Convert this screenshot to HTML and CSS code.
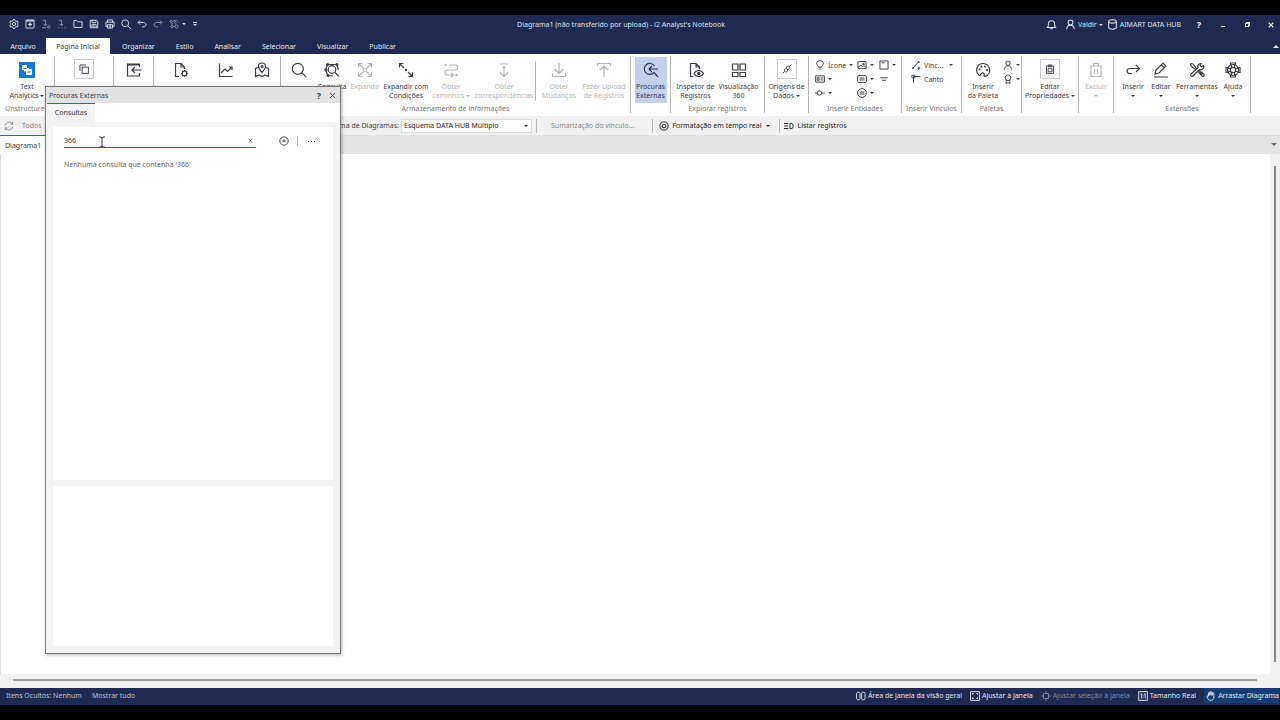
FILE: index.html
```html
<!DOCTYPE html>
<html lang="pt-BR">
<head>
    <meta charset="UTF-8">
    <meta name="viewport" content="width=device-width, initial-scale=1.0">
    <title>Diagrama1 - i2 Analyst's Notebook</title>
    <link rel="stylesheet" href="styles.css">
</head>
<body>
    <!-- icons -->
    <svg class="sprite" aria-hidden="true">
        <symbol id="gear" viewBox="0 0 16 16"><path d="M6.7 1h2.6l.5 2 1.6.9 2-.6 1.3 2.3L13.200 7v2l1.500 1.400-1.300 2.300-2-.6-1.600.9-.5 2H6.700l-.5-2-1.600-.9-2 .6-1.300-2.300L2.800 9V7L1.300 5.600l1.300-2.300 2 .6L6.200 3z"/><circle cx="8" cy="8" r="2.500"/></symbol>
        <symbol id="newdoc" viewBox="0 0 16 16"><rect x="1.500" y="1.500" width="13" height="13" rx="1"/><path d="M1.500 3h13M8 5.500v6M5 8.500h6" stroke-width="2"/></symbol>
        <symbol id="get" viewBox="0 0 16 16"><path d="M3 2h4v8M4 8l3 3 3-3M2 14h6"/><circle cx="12.500" cy="13" r="2"/></symbol>
        <symbol id="put" viewBox="0 0 16 16"><path d="M3 2h4v8M4 8l3 3 3-3M2 14h2M7 14h2M12 14h2"/></symbol>
        <symbol id="folder" viewBox="0 0 16 16"><path d="M1.500 13.500v-11h4.500l2 2h6.500v9z"/></symbol>
        <symbol id="save" viewBox="0 0 16 16"><path d="M2 2h10l2 2v10H2zM5 2v4h6V2M4.500 14V9h7v5M6 11.500h4"/></symbol>
        <symbol id="print" viewBox="0 0 16 16"><path d="M4 5V1.500h8V5M4 12H1.500V5h13v7H12M4 9h8v5.500H4zM6 11h4M6 13h4"/></symbol>
        <symbol id="search" viewBox="0 0 16 16"><circle cx="6.800" cy="6.800" r="5.500"/><path d="M10.700 10.700l4.500 4.500"/></symbol>
        <symbol id="undo" viewBox="0 0 16 16"><path d="M5 2L1.500 5.500 5 9M2 5.500h8.500c5 0 5 7 0 7H8"/></symbol>
        <symbol id="redo" viewBox="0 0 16 16"><path d="M11 2l3.500 3.500L11 9M14 5.500H5.500c-5 0-5 7 0 7H8"/></symbol>
        <symbol id="nodes" viewBox="0 0 16 16"><circle cx="3.500" cy="4" r="2"/><circle cx="9" cy="3.500" r="1.500"/><circle cx="5" cy="12" r="2"/><circle cx="12" cy="12" r="2.500"/><path d="M12 2l2 2-2 2M7 12h2M5 6v3M9 6l2 3"/></symbol>
        <symbol id="bell" viewBox="0 0 16 16"><path d="M2 12.500c1.500-1.500 1.500-3 1.500-5a4.500 5 0 0 1 9 0c0 2 0 3.500 1.500 5zM6.500 13.500c.5 1.500 2.500 1.500 3 0"/></symbol>
        <symbol id="user" viewBox="0 0 16 16"><circle cx="8" cy="5" r="3.500"/><path d="M2.500 15c0-8 11-8 11 0"/></symbol>
        <symbol id="db" viewBox="0 0 16 16"><ellipse cx="8" cy="3.500" rx="5.500" ry="2.500"/><path d="M2.500 3.500v9c0 3 11 3 11 0v-9"/></symbol>
        <symbol id="text" viewBox="0 0 16 16"><path class="blue" d="M0 0h16v16H0z"/><path class="white" d="M3 3h5v3h2v1h3v6H7V9.500H5V8H3z"/><path class="blue" d="M4.500 6h3v1h-3zM8.500 9.500h3v1h-3z"/></symbol>
        <symbol id="copy" viewBox="0 0 16 16"><rect x="5" y="5" width="10" height="10"/><path d="M1.500 11V1.500H11"/></symbol>
        <symbol id="import" viewBox="0 0 16 16"><path d="M13.500 5V2h-12v12h12v-3M1.500 3h12" /><path d="M15.500 8H6M9 5L6 8l3 3"/></symbol>
        <symbol id="docgear" viewBox="0 0 16 16"><path d="M6 14.500H2.500v-13H8L11.500 5v2M8 1.500V5h3.500"/><circle cx="11.500" cy="11.500" r="2.300"/><path d="M11.500 8v1M11.500 14v1M8 11.500h1M14 11.500h1M9 9l.8.8M13.300 13.300l.7.700M14 9l-.7.800M9.800 13.200L9 14"/></symbol>
        <symbol id="chart" viewBox="0 0 16 16"><path d="M1.500 1.500v13h13M3 11l4-4 2.500 2.500L14 5M11 5h3v3"/></symbol>
        <symbol id="map" viewBox="0 0 16 16"><path d="M4 5.500L1.500 6.500v8L5 13l3 1.500 3-1.500 3.500 1.500v-8L12 5.500M8 10.500C5.500 7.500 4.500 6 4.500 4.500a3.500 3.500 0 0 1 7 0c0 1.500-1 3-3.500 6z"/><circle cx="8" cy="4.500" r="1"/></symbol>
        <symbol id="netsearch" viewBox="0 0 16 16"><circle cx="8" cy="7.500" r="3.800"/><path d="M11 10.500l4 4M2.500 2.500h10.500M3.500 3L1.500 8l2.500 5.500L9 14M13 3l1.500 5"/><circle class="dot" cx="3.500" cy="2.500" r="1.500"/><circle class="dot" cx="13" cy="2.500" r="1.500"/><circle class="dot" cx="1.800" cy="8" r="1.500"/><circle class="dot" cx="4" cy="13.500" r="1.500"/></symbol>
        <symbol id="expand" viewBox="0 0 16 16"><path d="M1.500 5.500v-4h4M10.500 1.500h4v4M14.500 10.500v4h-4M5.500 14.500h-4v-4M2 2l4.500 4.500M14 2L9.500 6.500M14 14L9.500 9.500M2 14l4.500-4.500"/><circle cx="8" cy="8" r="1.500"/></symbol>
        <symbol id="expandc" viewBox="0 0 16 16"><path d="M1.500 5.500v-4h4M14.500 10.500v4h-4M2 2l4 4M10 10l4 4"/><circle class="dot" cx="8" cy="8" r="1.200"/></symbol>
        <symbol id="route" viewBox="0 0 16 16"><path d="M6 3h6c3.500 0 3.500 5 0 5H4.500c-3.500 0-3.500 5 0 5H10M8 11l2.500 2L8 15"/><circle class="dot" cx="2.500" cy="3" r="1.200"/><circle class="dot" cx="13.500" cy="13" r="1.200"/></symbol>
        <symbol id="match" viewBox="0 0 16 16"><path d="M4 2h8M8 4.500V14M4 10.500L8 14.500l4-4"/><path d="M6 5h4"/></symbol>
        <symbol id="down" viewBox="0 0 16 16"><path d="M8 1v10M3.500 7L8 11.500 12.500 7M1.500 11v3.500h13V11"/></symbol>
        <symbol id="up" viewBox="0 0 16 16"><path d="M1.500 4V1.500h13V4M8 15V4M3.500 8.500L8 4l4.500 4.500"/></symbol>
        <symbol id="extsearch" viewBox="0 0 16 16"><path d="M11.500 4A5.500 5.500 0 1 0 11 10.500L15 15M15 7H6M9 4L6 7l3 3"/></symbol>
        <symbol id="doceye" viewBox="0 0 16 16"><path d="M5 14.500H2.500v-13H8L11.500 5v2M8 1.500V5h3.500M6 11.500c2.500-4 7-4 9.500 0-2.500 4-7 4-9.500 0z"/><circle class="dot" cx="10.700" cy="11.500" r="1.700"/></symbol>
        <symbol id="grid" viewBox="0 0 16 16"><path d="M1.500 2h5.500v6H1.500zM9 2h5.500v6H9zM1.500 10.500H7v4H1.500zM9 10.500h5.500v4H9z"/></symbol>
        <symbol id="plug" viewBox="0 0 16 16"><path d="M1 15l3-3M4 12c-1-3 1-5 3-5l2 2c0 3-2 5-5 3zM15 1l-3 3M12 4c1 3-1 5-3 5L7 7c0-3 2-5 5-3z"/></symbol>
        <symbol id="bulb" viewBox="0 0 16 16"><path d="M5.500 11.500c0-2-3-3-3-6a5.500 4.500 0 0 1 11 0c0 3-3 4-3 6zM6 14.500h4"/></symbol>
        <symbol id="image" viewBox="0 0 16 16"><path d="M1.500 2.500h13v11h-13zM2 12l4-4 3 3 2-2 3 3M9.500 5.500h2v2h-2z"/></symbol>
        <symbol id="frame" viewBox="0 0 16 16"><path d="M1.500 1.500h13v13h-13zM4 4.500h5"/></symbol>
        <symbol id="card" viewBox="0 0 16 16"><path d="M1 3h14v10H1zM3.500 6h3v4h-3zM9 6.500h4M9 9.500h4"/></symbol>
        <symbol id="box" viewBox="0 0 16 16"><rect x="1" y="2.500" width="14" height="11" rx="2"/><path d="M4 6.500h8M4 9.500h8"/></symbol>
        <symbol id="lines" viewBox="0 0 16 16"><path d="M2 6h12M4.500 10h7"/></symbol>
        <symbol id="theme" viewBox="0 0 16 16"><path d="M0 8h3M11 8h5"/><circle cx="7" cy="8" r="3.500"/></symbol>
        <symbol id="circle" viewBox="0 0 16 16"><circle cx="8" cy="8" r="7"/><path d="M4 6.500h8M4 9.500h8"/></symbol>
        <symbol id="link" viewBox="0 0 16 16"><path d="M3 13L12 3M10 13h5M12.500 10.500v5"/><circle class="dot" cx="3" cy="13" r="1.500"/><circle class="dot" cx="12.500" cy="3" r="1.500"/></symbol>
        <symbol id="corner" viewBox="0 0 16 16"><path d="M4 14V4h11M1.500 2h5v4h-5z"/></symbol>
        <symbol id="palette" viewBox="0 0 16 16"><path d="M8 1.500a6.500 6.500 0 0 0-4 11.500c2 1.500 1-1.500 3-2s2.500 1 2 3c1 1.500 6-1.500 5.700-6A6.500 6.500 0 0 0 8 1.500z"/><circle class="dot" cx="4.500" cy="7.500" r="1"/><circle class="dot" cx="6.500" cy="4.500" r="1"/><circle class="dot" cx="10" cy="4.500" r="1"/><circle class="dot" cx="12" cy="8" r="1"/></symbol>
        <symbol id="badge" viewBox="0 0 16 16"><circle cx="8" cy="6" r="4.500"/><path d="M5 10v5.500l3-2 3 2V10"/></symbol>
        <symbol id="clip" viewBox="0 0 16 16"><path d="M2.500 3h11v12h-11zM5.500 1.500h5v3h-5zM5 7.500h6v5H5z"/></symbol>
        <symbol id="trash" viewBox="0 0 16 16"><path d="M1.500 4h13M5.500 4V1.500h5V4M3 4v10.500h10V4M6.500 7v5M9.500 7v5"/></symbol>
        <symbol id="forward" viewBox="0 0 16 16"><path d="M11 3l3.500 3.500L11 10M14 6.500H5C1 6.500 1 11.500 5 11.500h2"/></symbol>
        <symbol id="pencil" viewBox="0 0 16 16"><path d="M2 12l1-4 7-7 3 3-7 7zM8.500 3l3 3M1 15h14"/></symbol>
        <symbol id="tools" viewBox="0 0 16 16"><path d="M1.500 1.500l2.500 0.500 3.500 4.500M1.500 1.500L2 4l4.500 3.500M9 9.500l4 4.500c1.500 1.500 3-.5 1.500-2L10 8.500M11 10l2.500 2.500M12 1.500a3 3 0 0 0-3 4L2 12c-1 2 1 3 2 2l6.500-6.500c3 1 5-2 4-4L12.500 5 11 3.500z"/></symbol>
        <symbol id="buoy" viewBox="0 0 16 16"><circle cx="8" cy="8" r="5.500"/><circle cx="8" cy="8" r="2.700"/><path d="M5.500 3V1h5v2M5.500 13v2h5v-2M3 5.500H1v5h2M13 5.500h2v5h-2M6.500 2.500v3M9.500 2.500v3M6.500 10.500v3M9.500 10.500v3M2.500 6.500h3M2.500 9.500h3M10.500 6.500h3M10.500 9.500h3"/></symbol>
        <symbol id="refresh" viewBox="0 0 16 16"><path d="M2 7c1-6 9-7 12-2M14 1.500V5h-3.500M14 9c-1 6-9 7-12 2M2 14.500V11h3.500"/></symbol>
        <symbol id="target" viewBox="0 0 16 16"><circle cx="8" cy="8" r="6.700"/><circle cx="8" cy="8" r="3"/></symbol>
        <symbol id="list" viewBox="0 0 16 16"><path d="M0 4h7M0 8h7M0 12h7M9.500 4h3c3 0 3 8 0 8h-3z"/></symbol>
        <symbol id="plus" viewBox="0 0 16 16"><circle cx="8" cy="8" r="6.700"/><path d="M8 5.500v5M5.500 8h5"/></symbol>
        <symbol id="panes" viewBox="0 0 16 16"><rect x="1" y="2" width="5.500" height="12" rx="2"/><rect x="9" y="2" width="5.500" height="12" rx="2"/></symbol>
        <symbol id="fit" viewBox="0 0 16 16"><path d="M1 1h14v14H1zM4 6V4h2M10 4h2v2M12 10v2h-2M6 12H4v-2"/></symbol>
        <symbol id="fitsel" viewBox="0 0 16 16"><path d="M4 4h8v8H4zM8 0v4M8 12v4M0 8h4M12 8h4"/></symbol>
        <symbol id="real" viewBox="0 0 16 16"><path d="M1 1h14v14H1zM4 5l1.500-1v8M10 5l1.500-1v8M8 6v1.500M8 9v1.500"/></symbol>
        <symbol id="hand" viewBox="0 0 16 16"><path d="M4 8V3.500c0-1.500 2-1.500 2 0V7M6 6V2c0-1.500 2-1.500 2 0v5M8 6V2.500c0-1.500 2-1.500 2 0V7M10 7V4c0-1.500 2.500-1.500 2.500 0v6c0 6-8 6-9 3L1.500 9c0-1.500 1.500-1.500 2.500 0"/></symbol>
        <symbol id="ibeam" viewBox="0 0 8 12"><path d="M1 1h2l1 1 1-1h2M4 2v8M1 11h2l1-1 1 1h2"/></symbol>
    </svg>

    <header class="titlebar">
        <div class="quick">
            <button aria-label="Opções"><svg><use href="#gear"/></svg></button>
            <button aria-label="Novo"><svg><use href="#newdoc"/></svg></button>
            <button class="dim" aria-label="Obter"><svg><use href="#get"/></svg></button>
            <button class="dim" aria-label="Enviar"><svg><use href="#put"/></svg></button>
            <button aria-label="Abrir"><svg><use href="#folder"/></svg></button>
            <button aria-label="Salvar"><svg><use href="#save"/></svg></button>
            <button aria-label="Imprimir"><svg><use href="#print"/></svg></button>
            <button aria-label="Visualizar impressão"><svg><use href="#search"/></svg></button>
            <button aria-label="Desfazer"><svg><use href="#undo"/></svg></button>
            <button class="dim" aria-label="Refazer"><svg><use href="#redo"/></svg></button>
            <button class="dim" aria-label="Seleção"><svg><use href="#nodes"/></svg></button>
            <i class="arrow"></i>
            <button class="customize" aria-label="Personalizar"><i class="arrow"></i></button>
        </div>
        <h1 class="title">Diagrama1 (não transferido por upload) - i2 Analyst's Notebook</h1>
        <div class="account">
            <button class="bell" aria-label="Notificações"><svg><use href="#bell"/></svg></button>
            <button class="who"><svg><use href="#user"/></svg>Valdir <i class="arrow"></i></button>
            <button class="hub"><svg><use href="#db"/></svg>AIMART DATA HUB</button>
            <button class="win" aria-label="Ajuda"><b>?</b></button>
            <button class="win" aria-label="Minimizar"><i class="minimize"></i></button>
            <button class="win" aria-label="Restaurar"><i class="restore"></i></button>
            <button class="win close" aria-label="Fechar"><svg viewBox="0 0 8 8"><path d="M1 1l6 6M7 1L1 7"/></svg></button>
        </div>
    </header>

    <nav class="tabs">
        <button class="file">Arquivo</button>
        <button class="active">Página Inicial</button>
        <button>Organizar</button>
        <button>Estilo</button>
        <button>Analisar</button>
        <button>Selecionar</button>
        <button>Visualizar</button>
        <button>Publicar</button>
        <button class="collapse" aria-label="Recolher"><i class="arrow up"></i></button>
    </nav>

    <section class="ribbon">
        <div class="group g-text">
            <div class="items"><button class="tool w54"><svg><use href="#text"/></svg><span>Text<br>Analytics <i class="arrow"></i></span></button></div>
            <p>Unstructured</p>
        </div>
        <div class="group g-copy">
            <div class="items"><button class="tool w58" aria-label="Área de Transferência"><span class="boxed"><svg><use href="#copy"/></svg></span></button></div>
        </div>
        <div class="group g-import">
            <div class="items"><button class="tool w40" aria-label="Importar"><svg><use href="#import"/></svg></button></div>
        </div>
        <div class="group g-report">
            <div class="items">
                <button class="tool w54" aria-label="Relatório"><svg><use href="#docgear"/></svg></button>
                <button class="tool w36" aria-label="Gráfico"><svg><use href="#chart"/></svg></button>
                <button class="tool w36" aria-label="Mapa"><svg><use href="#map"/></svg></button>
            </div>
        </div>
        <div class="group g-store">
            <div class="items">
                <button class="tool w36" aria-label="Procura"><svg><use href="#search"/></svg></button>
                <button class="tool w30"><svg><use href="#netsearch"/></svg><span>Consulta</span></button>
                <button class="tool w36" disabled><svg><use href="#expand"/></svg><span>Expandir</span></button>
                <button class="tool w46"><svg><use href="#expandc"/></svg><span>Expandir com<br>Condições</span></button>
                <button class="tool w44" disabled><svg><use href="#route"/></svg><span>Obter<br>caminhos <i class="arrow"></i></span></button>
                <button class="tool w62" disabled><svg><use href="#match"/></svg><span>Obter<br>correspondências</span></button>
                <i class="split"></i>
                <button class="tool w46" disabled><svg><use href="#down"/></svg><span>Obter<br>Mudanças</span></button>
                <button class="tool w44" disabled><svg><use href="#up"/></svg><span>Fazer Upload<br>de Registros</span></button>
            </div>
            <p>Armazenamento de informações</p>
        </div>
        <div class="group g-ext">
            <div class="items"><button class="tool selected"><svg><use href="#extsearch"/></svg><span>Procuras<br>Externas</span></button></div>
        </div>
        <div class="group g-explore">
            <div class="items">
                <button class="tool w46"><svg><use href="#doceye"/></svg><span>Inspetor de<br>Registros</span></button>
                <button class="tool w40"><svg><use href="#grid"/></svg><span>Visualização<br>360</span></button>
            </div>
            <p>Explorar registros</p>
        </div>
        <div class="group g-source">
            <div class="items"><button class="tool w44"><span class="boxed"><svg><use href="#plug"/></svg></span><span>Origens de<br>Dados <i class="arrow"></i></span></button></div>
        </div>
        <div class="group g-entity">
            <div class="entities">
                <button><svg><use href="#bulb"/></svg>Ícone <i class="arrow"></i></button>
                <button aria-label="Imagem"><svg><use href="#image"/></svg><i class="arrow"></i></button>
                <button aria-label="Quadro"><svg><use href="#frame"/></svg><i class="arrow"></i></button>
                <button aria-label="Evento"><svg><use href="#card"/></svg><i class="arrow"></i></button>
                <button aria-label="Caixa"><svg><use href="#box"/></svg><i class="arrow"></i></button>
                <button aria-label="Texto"><svg><use href="#lines"/></svg></button>
                <button aria-label="Linha do tema"><svg><use href="#theme"/></svg><i class="arrow"></i></button>
                <button aria-label="Círculo"><svg><use href="#circle"/></svg><i class="arrow"></i></button>
            </div>
            <p>Inserir Entidades</p>
        </div>
        <div class="group g-link">
            <div class="links">
                <button><svg><use href="#link"/></svg>Vínc... <i class="arrow"></i></button>
                <button><svg><use href="#corner"/></svg>Canto</button>
            </div>
            <p>Inserir Vínculos</p>
        </div>
        <div class="group g-palette">
            <div class="items">
                <button class="tool w40"><svg><use href="#palette"/></svg><span>Inserir<br>da Paleta</span></button>
                <div class="links">
                    <button aria-label="Pessoa"><svg><use href="#user"/></svg><i class="arrow"></i></button>
                    <button aria-label="Insígnia"><svg><use href="#badge"/></svg><i class="arrow"></i></button>
                </div>
            </div>
            <p>Paletas</p>
        </div>
        <div class="group g-props">
            <div class="items"><button class="tool w58"><span class="boxed"><svg><use href="#clip"/></svg></span><span>Editar<br>Propriedades <i class="arrow"></i></span></button></div>
        </div>
        <div class="group g-delete">
            <div class="items"><button class="tool w36" disabled><svg><use href="#trash"/></svg><span>Excluir<br><i class="arrow"></i></span></button></div>
        </div>
        <div class="group g-addons">
            <div class="items">
                <button class="tool w30"><svg><use href="#forward"/></svg><span>Inserir<br><i class="arrow"></i></span></button>
                <button class="tool w26"><svg><use href="#pencil"/></svg><span>Editar<br><i class="arrow"></i></span></button>
                <button class="tool w46"><svg><use href="#tools"/></svg><span>Ferramentas<br><i class="arrow"></i></span></button>
                <button class="tool w26"><svg><use href="#buoy"/></svg><span>Ajuda<br><i class="arrow"></i></span></button>
            </div>
            <p>Extensões</p>
        </div>
    </section>

    <section class="toolbar">
        <div class="scheme">
            <button class="muted"><svg><use href="#refresh"/></svg>Todos</button>
            <label for="scheme">Esquema de Diagramas:</label>
        </div>
        <div class="combo">
            <select id="scheme"><option>Esquema DATA HUB Múltiplo</option></select>
            <i class="arrow"></i>
        </div>
        <button class="muted summary">Sumarização do vínculo...</button>
        <button class="format"><svg><use href="#target"/></svg>Formatação em tempo real <i class="arrow"></i></button>
        <button class="records"><svg><use href="#list"/></svg>Listar registros</button>
    </section>

    <div class="docs">
        <button class="doc">Diagrama1</button>
        <button class="more" aria-label="Diagramas abertos"><i class="arrow"></i></button>
    </div>

    <main class="workspace">
        <div class="canvas"></div>
        <div class="vscroll"></div>
        <div class="hscroll"></div>
    </main>

    <footer class="status">
        <span>Itens Ocultos: Nenhum</span>
        <button class="show">Mostrar tudo</button>
        <div class="views">
            <button><svg><use href="#panes"/></svg>Área de janela da visão geral</button>
            <button><svg><use href="#fit"/></svg>Ajustar à janela</button>
            <button class="off"><svg><use href="#fitsel"/></svg>Ajustar seleção à janela</button>
            <button><svg><use href="#real"/></svg>Tamanho Real</button>
            <button class="drag"><svg><use href="#hand"/></svg>Arrastar Diagrama</button>
        </div>
    </footer>

    <section class="dialog" role="dialog" aria-labelledby="dlg">
        <div class="dlg-head">
            <h2 id="dlg">Procuras Externas</h2>
            <button aria-label="Ajuda"><b>?</b></button>
            <button aria-label="Fechar"><svg viewBox="0 0 8 8"><path d="M1 1l6 6M7 1L1 7"/></svg></button>
        </div>
        <div class="dlg-tabs"><button>Consultas</button></div>
        <div class="dlg-body">
            <div class="panel queries">
                <div class="search-row">
                    <div class="field">
                        <input type="text" value="366" aria-label="Procurar consultas">
                        <button aria-label="Limpar"><svg viewBox="0 0 8 8"><path d="M1 1l6 6M7 1L1 7"/></svg></button>
                        <svg class="cursor"><use href="#ibeam"/></svg>
                    </div>
                    <button class="add" aria-label="Adicionar"><svg><use href="#plus"/></svg></button>
                    <button class="dots" aria-label="Mais"><i></i><i></i><i></i></button>
                </div>
                <p>Nenhuma consulta que contenha '366'</p>
            </div>
            <div class="panel details"></div>
        </div>
    </section>
</body>
</html>
```
FILE: styles.css
```css
*,*::before,*::after{
    box-sizing: border-box;
}
:root{
    --navy:#1e2a50;
    --ink:#3c3c44;
    --line:#b4b4b4;
    --blue:#2b68b4;
}
body{
    margin: 0;
    padding: 15px 0;
    height: 100vh;
    display: flex;
    flex-direction: column;
    position: relative;
    overflow: hidden;
    background: #000;
    color: var(--ink);
    font: 7px/9px "Noto Sans", "Open Sans", sans-serif;
}
h1,h2,p{
    margin: 0;
    font-size: inherit;
    font-weight: normal;
}
button,input,select{
    margin: 0;
    padding: 0;
    border: 0;
    background: none;
    color: inherit;
    font: inherit;
    white-space: nowrap;
}
button{
    display: inline-flex;
    align-items: center;
    justify-content: center;
}
svg{
    width: 10px;
    height: 10px;
    flex: none;
    fill: none;
    stroke: currentColor;
    stroke-width: 1.5;
}
.sprite{
    position: absolute;
    width: 0;
    height: 0;
}
.dot{
    fill: currentColor;
    stroke: none;
}
.blue{
    fill: #1479d0;
    stroke: none;
}
.white{
    fill: #fff;
    stroke: none;
}
.arrow{
    display: inline-block;
    border: 2px solid transparent;
    border-top-color: currentColor;
    border-bottom: 0;
    vertical-align: middle;
}
.arrow.up{
    border: 3px solid transparent;
    border-bottom-color: currentColor;
    border-top: 0;
}

/* title bar */
.titlebar{
    display: grid;
    grid-template-columns: 1fr auto 1fr;
    align-items: center;
    height: 23px;
    padding: 0 4px 4px 6px;
    background: var(--navy);
    color: #dfe3ee;
}
.quick{
    display: flex;
    align-items: center;
    padding-bottom: 2px;
}
.quick button{
    width: 16px;
}
.quick .dim{
    opacity: .6;
}
.quick .customize{
    width: 14px;
    margin-left: 2px;
    flex-direction: column;
    gap: 1px;
}
.customize::before{
    content: '';
    width: 4px;
    height: 1px;
    background: currentColor;
}
.title{
    margin-right: 40px;
}
.account{
    display: flex;
    align-items: center;
    justify-content: flex-end;
}
.account svg{
    width: 11px;
    height: 11px;
}
.account button{
    gap: 2px;
}
.account .bell{
    margin-right: 8px;
}
.account .who{
    margin-right: 4px;
}
.account .hub{
    margin-right: 6px;
}
.account .win{
    width: 24px;
    color: #fff;
}
.account .win.close{
    width: 14px;
    margin-left: 5px;
    margin-right: -2px;
}
.account .win svg{
    width: 6px;
    height: 6px;
}
.titlebar b,
.dlg-head b{
    font-size: 9px;
}
.minimize{
    width: 4px;
    border-bottom: 1px solid;
    margin-top: 4px;
}
.restore{
    width: 4px;
    height: 4px;
    border: 1px solid;
    box-shadow: 1px -1px 0 0 currentColor;
}

/* ribbon tabs */
.tabs{
    display: flex;
    height: 16px;
    background: var(--navy);
    color: #e6e9f2;
}
.tabs button{
    padding: 0 9px 0 12px;
}
.tabs .file{
    width: 46px;
    padding: 0;
}
.tabs .active{
    width: 64px;
    padding: 0;
    background: #fff;
    color: var(--ink);
}
.tabs .collapse{
    margin-left: auto;
    padding: 0 1px;
}

/* ribbon */
.ribbon{
    display: flex;
    height: 62px;
    padding: 2px 0 3px;
    background: #fff;
}
.group{
    flex: none;
    display: flex;
    flex-direction: column;
    border-right: 1px solid var(--line);
}
.group p{
    margin-top: auto;
    color: #777;
    text-align: center;
    white-space: nowrap;
}
.g-text{ width: 55px; }
.g-copy{ width: 59px; }
.g-import{ width: 40px; }
.g-report{ width: 127px; }
.g-store{ width: 350px; }
.g-ext{ width: 40px; }
.g-explore{ width: 94px; }
.g-source{ width: 44px; }
.g-entity{ width: 93px; }
.g-link{ width: 60px; }
.g-palette{ width: 60px; }
.g-props{ width: 57px; }
.g-delete{ width: 35px; }
.g-addons{ width: 137px; }
.items{
    display: flex;
    justify-content: center;
    height: 47px;
}
.g-store .items{
    justify-content: flex-start;
}
.g-explore .items{
    padding-right: 4px;
}
.tool{
    flex-direction: column;
    justify-content: flex-start;
    flex: none;
    height: 46px;
    padding-top: 6px;
    text-align: center;
}
.tool > svg{
    width: 16px;
    height: 16px;
    margin-bottom: 4px;
    stroke-width: 1.2;
}
.tool:disabled{
    color: #b4b4b4;
}
.boxed{
    display: flex;
    padding: 4px;
    margin: -3px 0 3px;
    border: 1px solid #ccc;
}
.boxed svg{
    width: 10px;
    height: 10px;
}
.w26{ width: 26px; }
.w30{ width: 30px; }
.w36{ width: 36px; }
.w40{ width: 40px; }
.w44{ width: 44px; }
.w46{ width: 46px; }
.w54{ width: 54px; }
.w58{ width: 58px; }
.w62{ width: 62px; }
.split{
    width: 1px;
    height: 40px;
    margin-top: 5px;
    background: var(--line);
}
.selected{
    width: 32px;
    margin-top: 1px;
    padding-top: 5px;
    background: #c5d0ec;
    color: #26345e;
}
.entities{
    display: grid;
    grid-template-columns: 42px 22px 22px;
    grid-auto-rows: 14px;
    padding: 2px 0 0 6px;
}
.entities button,
.links button{
    justify-content: flex-start;
    gap: 3px;
}
.links{
    display: grid;
    grid-auto-rows: 14px;
    align-content: start;
    padding: 2px 0 0 9px;
}
.items .links{
    padding-left: 0;
}
.links .arrow{
    margin-left: 3px;
}
.items .links .arrow{
    margin-left: 0;
}

/* toolbar */
.toolbar{
    display: flex;
    align-items: center;
    height: 19px;
    background: #f1f1f1;
}
.scheme{
    display: flex;
    justify-content: space-between;
    width: 401px;
    padding: 0 2px 0 4px;
}
.scheme button{
    gap: 8px;
}
.muted{
    color: #888;
}
.combo{
    display: flex;
    align-items: center;
    width: 131px;
    height: 14px;
    padding-right: 3px;
    border: 1px solid #dcdcdc;
    background: #fff;
    color: #222;
}
.combo select{
    flex: 1;
    padding: 0 2px;
    appearance: none;
}
.toolbar > button{
    height: 14px;
    padding-left: 6px;
    gap: 3px;
    border-left: 1px solid var(--line);
    color: #222;
}
.toolbar > .summary{
    margin-left: 4px;
    padding: 0 18px 0 14px;
    color: #888;
}
.toolbar .format{
    padding-right: 9px;
}
.toolbar .format .arrow{
    margin-left: 2px;
}
.toolbar .records{
    padding-left: 4px;
}

/* open diagrams */
.docs{
    display: flex;
    justify-content: space-between;
    height: 19px;
    background: #e3e3e3;
}
.doc{
    width: 60px;
    padding-left: 5px;
    justify-content: flex-start;
    border-top: 1px solid var(--blue);
    background: #fff;
}
.more{
    padding-right: 3px;
    color: #666;
}
.more .arrow{
    border-width: 3px;
    border-bottom: 0;
}

/* workspace */
.workspace{
    flex: 1;
    display: grid;
    grid-template-columns: 1fr 10px;
    grid-template-rows: 1fr 14px;
    background: #f1f1f1;
}
.canvas{
    border-left: 1px solid #ddd;
    background: #fff;
}
.vscroll{
    margin: 12px 4px 12px;
    border-left: 2px solid #888;
}
.hscroll{
    margin: 5px 13px 0;
    border-top: 2px solid #999;
}

/* status bar */
.status{
    display: flex;
    align-items: center;
    height: 17px;
    padding: 0 1px 2px 6px;
    background: var(--navy);
    color: #b9c2da;
}
.status .show{
    margin-left: 10px;
}
.views{
    display: flex;
    align-self: stretch;
    gap: 8px;
    margin-left: auto;
    color: #e3e7f2;
}
.views button{
    gap: 2px;
}
.views .off{
    color: #8089a8;
}
.views .drag{
    padding-left: 2px;
    background: #173e73;
}

/* floating dialog */
.dialog{
    position: absolute;
    top: 86px;
    bottom: 66px;
    left: 45px;
    width: 296px;
    display: flex;
    flex-direction: column;
    border: 1px solid #777;
    background: #f3f3f3;
    box-shadow: 1px 1px 3px rgba(0, 0, 0, .3);
}
.dlg-head{
    display: flex;
    align-items: center;
    height: 16px;
    padding: 0 4px 0 3px;
    gap: 8px;
    background: #e2e2e2;
}
.dlg-head h2{
    flex: 1;
}
.dlg-head svg{
    width: 7px;
    height: 7px;
    stroke-width: 1;
}
.dlg-tabs{
    display: flex;
    height: 19px;
    padding-left: 1px;
    background: #fff;
}
.dlg-tabs button{
    width: 48px;
    padding-bottom: 2px;
    border-top: 1px solid var(--blue);
    background: #f3f3f3;
}
.dlg-body{
    flex: 1;
    display: flex;
    flex-direction: column;
    gap: 6px;
    padding: 5px 7px 7px;
}
.panel{
    background: #fff;
}
.queries{
    flex: 1;
    padding: 7px 11px;
}
.queries p{
    margin-top: 12px;
    color: #666;
}
.details{
    flex: 0 0 160px;
}
.search-row{
    display: flex;
    align-items: center;
}
.field{
    position: relative;
    display: flex;
    width: 192px;
    height: 14px;
    border-bottom: 1px solid var(--blue);
}
.field input{
    flex: 1;
    min-width: 0;
    outline: 0;
}
.field button{
    width: 12px;
}
.field button svg{
    width: 5px;
    height: 5px;
    stroke-width: 1;
}
.cursor{
    position: absolute;
    left: 34px;
    top: 2px;
    width: 8px;
    height: 12px;
    stroke-width: 1;
}
.add{
    padding: 0 8px 0 23px;
    border-right: 1px solid #aaa;
}
.dots{
    gap: 2px;
    padding-left: 10px;
}
.dots i{
    width: 1px;
    height: 1px;
    background: #222;
}
```
